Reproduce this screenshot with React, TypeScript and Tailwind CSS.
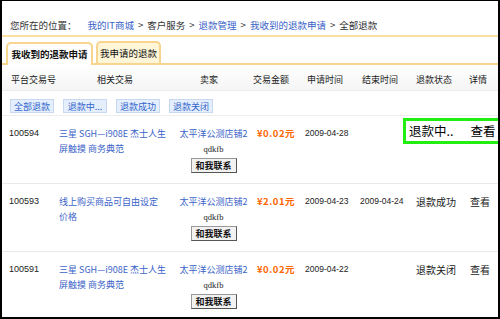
const font = "font-['Noto_Sans_CJK_SC',sans-serif]";

const rows = [
  {
    id: "100594",
    title: ["三星 SGH—i908E 杰士人生", "屏触摸 商务典范"],
    amount: "¥0.02元",
    apply: "2009-04-28",
    end: "",
    status: "退款中..",
    highlight: true,
  },
  {
    id: "100593",
    title: ["线上购买商品可自由设定", "价格"],
    amount: "¥2.01元",
    apply: "2009-04-23",
    end: "2009-04-24",
    status: "退款成功",
    highlight: false,
  },
  {
    id: "100591",
    title: ["三星 SGH—i908E 杰士人生", "屏触摸 商务典范"],
    amount: "¥0.02元",
    apply: "2009-04-22",
    end: "",
    status: "退款关闭",
    highlight: false,
  },
];

const filters = ["全部退款", "退款中...", "退款成功", "退款关闭"];

export default function App() {
  return (
    <div
      className={`w-[500px] h-[319px] overflow-hidden bg-white border-t border-l-2 border-r-2 border-b-2 border-black text-[9px] leading-[15px] text-[#222] whitespace-nowrap ${font}`}
    >
      {/* breadcrumb */}
      <div className="flex items-center h-[34px] pl-[8px] pt-[14px] text-[9.5px] text-[#333]">
        <span>您所在的位置：</span>
        <span className="ml-[11px] text-[#3a63c8]">我的IT商城</span>
        <span className="mx-[4px]">&gt;</span>
        <span>客户服务</span>
        <span className="mx-[4px]">&gt;</span>
        <span className="text-[#3a63c8]">退款管理</span>
        <span className="mx-[4px]">&gt;</span>
        <span className="text-[#3a63c8]">我收到的退款申请</span>
        <span className="mx-[4px]">&gt;</span>
        <span>全部退款</span>
      </div>
      <div className="h-[2px] bg-[#fbe0a6]" />

      {/* tabs */}
      <div className="flex items-end h-[28px] pl-[4px] gap-[3px] border-b-2 border-[#f7d58e] text-[9.5px]">
        <div className="h-[23px] w-[87px] -mb-[2px] flex items-center justify-center rounded-t-[5px] border-2 border-b-0 border-[#f7d58e] bg-white font-bold text-[#111]">
          我收到的退款申请
        </div>
        <div className="h-[22px] w-[65px] flex items-center justify-center rounded-t-[5px] border-2 border-b-0 border-[#f7d58e] bg-[#fff6d8] text-[#111]">
          我申请的退款
        </div>
      </div>

      {/* header */}
      <div className="flex h-[26px] items-center pt-[3px] border-b border-[#eeeeee] bg-gradient-to-b from-white to-[#f5f5f5] text-[#222]">
        <div className="w-[56px] pl-[9px]">平台交易号</div>
        <div className="w-[119px] pl-[39px]">相关交易</div>
        <div className="w-[73px] pl-[23px]">卖家</div>
        <div className="w-[53px] pl-[3px]">交易金额</div>
        <div className="w-[56px] pl-[4px]">申请时间</div>
        <div className="w-[55px] pl-[3px]">结束时间</div>
        <div className="w-[52px] pl-[2px]">退款状态</div>
        <div className="flex-1 pl-[3px]">详情</div>
      </div>

      {/* filters */}
      <div className="flex h-[25px] items-center gap-[9px] pl-[8px] pt-[6px] border-b border-[#eeeeee]">
        {filters.map((f) => (
          <div
            key={f}
            className="h-[14px] w-[44px] flex items-center justify-center border border-[#c8d8f0] bg-[#e4eefc] text-[#3366cc] text-[9px] leading-none"
          >
            {f}
          </div>
        ))}
      </div>

      {/* rows */}
      {rows.map((r, i) => (
        <div
          key={r.id}
          className={`relative flex pt-[10px] h-[68px] ${i < 2 ? "border-b border-[#eaeaea]" : ""}`}
        >
          <div className="w-[56px] pl-[7px] font-['Liberation_Sans',sans-serif] text-[9px] text-[#222]">{r.id}</div>
          <div className="w-[119px] pl-[1px] text-[#3a63c8]">
            <div>{r.title[0]}</div>
            <div>{r.title[1]}</div>
          </div>
          <div className="w-[73px] flex flex-col items-center">
            <div className="text-[#3a63c8]">太平洋公测店铺2</div>
            <div className="text-[8.5px] leading-[12px] mt-[2px] text-[#222] font-['Liberation_Serif',serif]">qdkfb</div>
            <div className="mt-[3px] h-[15px] w-[46px] flex items-center justify-center border border-[#999] border-r-[#555] border-b-[#555] bg-[#f2f2f2] font-bold text-[9px] leading-none text-[#111]">
              和我联系
            </div>
          </div>
          <div className="w-[53px] pl-[7px] text-[9.5px] tracking-[0.5px] text-[#ff6600] font-bold">{r.amount}</div>
          <div className="w-[56px] pl-[2px] text-[8.5px] font-['Liberation_Sans',sans-serif] text-[#222]">{r.apply}</div>
          <div className="w-[55px] pl-[1px] text-[8.5px] font-['Liberation_Sans',sans-serif] text-[#222]">{r.end}</div>
          <div className="w-[56px] pl-[2px] text-[10px] text-[#222]">{r.highlight ? "" : r.status}</div>
          <div className="flex-1 pl-[0px] text-[10px] text-[#222]">{r.highlight ? "" : "查看"}</div>

          {r.highlight && (
            <div className="absolute left-[401px] top-[2px] w-[100px] h-[26px] border-[3px] border-[#22ee11] bg-white flex items-center pl-[3px] text-[12.5px] leading-none text-black">
              <span>退款中..</span>
              <span className="ml-[17px]">查看</span>
            </div>
          )}
        </div>
      ))}
    </div>
  );
}
